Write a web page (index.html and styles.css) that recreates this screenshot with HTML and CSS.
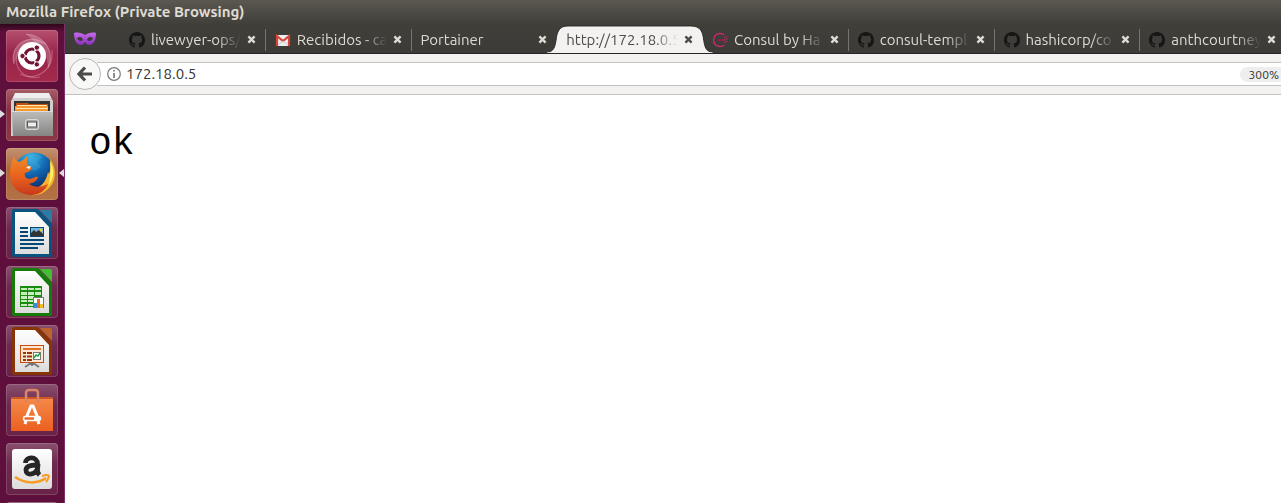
FILE: index.html
```html
<!DOCTYPE html>
<html lang="en">
<head>
<meta charset="utf-8">
<title>172.18.0.5</title>
<link rel="stylesheet" href="styles.css">
</head>
<body>
<svg class="defs" aria-hidden="true">
  <defs>
    <linearGradient id="paper" x1="0" y1="0" x2="0" y2="1"><stop offset="0" stop-color="#fff"/><stop offset="1" stop-color="#dcdcdc"/></linearGradient>
    <linearGradient id="steel" x1="0" y1="0" x2="0" y2="1"><stop offset="0" stop-color="#bdbdbb"/><stop offset="1" stop-color="#858583"/></linearGradient>
    <linearGradient id="bag" x1="0" y1="0" x2="0" y2="1"><stop offset="0" stop-color="#f58b4c"/><stop offset="1" stop-color="#eb5f1e"/></linearGradient>
    <radialGradient id="globe" cx=".4" cy=".1" r=".8"><stop offset="0" stop-color="#36b3e8"/><stop offset=".5" stop-color="#126bb4"/><stop offset="1" stop-color="#0b2c66"/></radialGradient>
    <linearGradient id="fox" x1="0" y1="0" x2="0" y2="1"><stop offset="0" stop-color="#ef8b28"/><stop offset=".55" stop-color="#e8601d"/><stop offset="1" stop-color="#c63a1b"/></linearGradient>
    <linearGradient id="mask" x1="0" y1="0" x2="0" y2="1"><stop offset="0" stop-color="#c46be8"/><stop offset="1" stop-color="#8a2fc0"/></linearGradient>
    <symbol id="github" viewBox="0 0 16 16"><path fill="#161616" d="M8 0C3.58 0 0 3.58 0 8c0 3.54 2.29 6.53 5.47 7.59.4.07.55-.17.55-.38 0-.19-.01-.82-.01-1.49-2.01.37-2.53-.49-2.69-.94-.09-.23-.48-.94-.82-1.13-.28-.15-.68-.52-.01-.53.63-.01 1.08.58 1.23.82.72 1.21 1.87.87 2.33.66.07-.52.28-.87.51-1.07-1.78-.2-3.64-.89-3.64-3.95 0-.87.31-1.59.82-2.15-.08-.2-.36-1.02.08-2.12 0 0 .67-.21 2.2.82a7.6 7.6 0 0 1 4 0c1.53-1.04 2.2-.82 2.2-.82.44 1.1.16 1.92.08 2.12.51.56.82 1.27.82 2.15 0 3.07-1.87 3.75-3.65 3.95.29.25.54.73.54 1.48 0 1.07-.01 1.93-.01 2.2 0 .21.15.46.55.38A8.01 8.01 0 0 0 16 8c0-4.42-3.58-8-8-8z"/></symbol>
    <symbol id="close" viewBox="0 0 9 9"><path d="M1.4 1.4l6.2 6.2M7.6 1.4L1.4 7.6" stroke="currentColor" stroke-width="2.4"/></symbol>
  </defs>
</svg>

<header class="titlebar">Mozilla Firefox (Private Browsing)</header>
<div class="desktop">
  <nav class="launcher" aria-label="Launcher">
    <button class="tile tile-dash" aria-label="Search your computer">
      <svg viewBox="0 0 52 52"><g fill="none" stroke="#efb7c6" stroke-opacity=".35" stroke-width="1.2"><path d="M8 34C3 14 24 2 40 14"/><path d="M20 4C38 5 50 22 42 38"/><path d="M46 20C48 40 30 52 14 44"/><path d="M34 47C18 50 6 38 12 22"/></g><path d="M20 4C38 5 50 22 42 38Q42 22 30 13z" fill="#fff" opacity=".22"/><path d="M8 34C3 14 24 2 40 14Q24 10 13 22z" fill="#fff" opacity=".2"/>
      <circle cx="26" cy="26" r="14" fill="#fff"/><circle cx="26" cy="26" r="7" fill="none" stroke="#731337" stroke-width="3.2"/><path d="M26 26H15M26 26l5.5-10M26 26l5.5 10" stroke="#fff" stroke-width="1.5"/><g fill="#731337" stroke="#fff"><circle cx="16.5" cy="26" r="2.7"/><circle cx="30.8" cy="17.6" r="2.7"/><circle cx="30.8" cy="34.4" r="2.7"/></g><circle cx="26" cy="26" r="5" fill="#fff"/></svg>
    </button>
    <button class="tile tile-files" aria-label="Files">
      <svg viewBox="0 0 52 52"><path d="M9 5h34l4 7v35H5V12z" fill="#cecece"/><path d="M9 4h34l2 5H7z" fill="#eee"/><path d="M8 12h36v10H8z" fill="#343434"/><path d="M10 14h12l1 1h19v7H10z" fill="#bd5414"/><path d="M9 17h33v5H9z" fill="#f39a35"/><path d="M11 16h30v1H11zM10 19h32v1H10z" fill="#ffe3b0"/><path d="M6 22h40l1 4v20q0 1-1 1H8q-1 0-1-1z" fill="url(#steel)"/><path d="M6 22h40v1H6z" fill="#ddd"/><rect x="19.500" y="30.500" width="13" height="10" rx="2" fill="#a8a8a8" stroke="#ddd"/><rect x="21.500" y="33" width="9" height="5" fill="#eee" stroke="#555"/></svg>
    </button>
    <button class="tile tile-firefox" aria-label="Firefox">
      <svg viewBox="0 0 52 52"><circle cx="28" cy="25" r="20.500" fill="url(#globe)"/><path d="M22 8c5-4 12-2 14 1l-5 5 4 5-7 4-5-4z" fill="#57b7df" opacity=".25"/><path d="M44 11C51 20 51 34 42 41c-5 5-11 7-17 6l-3-6c11 1 18-6 20-17l1 2c2-5 2-10 1-15z" fill="#f6b32b"/><path d="M44 13c5 9 4 18-2 25 2-6 3-12 2-25z" fill="#fff16b"/><path d="M8 9c1 3 3 4 5 5 3-1 6-3 8-6 0 4 0 6 1 9l4 3c-1 3-4 4-7 5-1 3 1 6 5 6 4-1 6-3 8-2-1 4-5 6-9 7 6 4 13 3 19 0-3 7-9 11-16 11C12 47 4 38 4 26c0-7 1-12 4-17z" fill="url(#fox)"/><path d="M20 19l5-1-2 3z" fill="#fff"/></svg>
    </button>
    <button class="tile" aria-label="LibreOffice Writer">
      <svg viewBox="0 0 52 52"><path d="M8 2h24l14 15v31q0 2-2 2H8q-2 0-2-2V4q0-2 2-2z" fill="#08537f"/><path d="M34 3h10q2 0 2 2v11z" fill="#287da7"/><path d="M9 5h20l14 15v27H9z" fill="url(#paper)"/><path d="M14 21h8M14 25h8M14 29h8M14 33h24M14 37h24M14 41h18" stroke="#064875" stroke-width="2"/><rect x="24.500" y="20.500" width="13" height="9" fill="#73b8dc" stroke="#064875"/><path d="M25 29v-3l3-3 2 2 3-2 4 4v2z" fill="#333"/><circle cx="35" cy="23" r="1.500" fill="#f4cb3c"/></svg>
    </button>
    <button class="tile" aria-label="LibreOffice Calc">
      <svg viewBox="0 0 52 52"><path d="M8 2h24l14 15v31q0 2-2 2H8q-2 0-2-2V4q0-2 2-2z" fill="#177b0c"/><path d="M34 3h10q2 0 2 2v11z" fill="#43bd31"/><path d="M9 5h20l14 15v27H9z" fill="url(#paper)"/><path d="M14 20h22v21H14z" fill="#178c0d"/><path d="M15 22h6v2h-6zm7 0h6v2h-6zm7 0h6v2h-6zM15 26h6v3h-6zm7 0h6v3h-6zm7 0h6v3h-6zM15 30h6v3h-6zm7 0h6v3h-6zM15 34h6v2h-6zm7 0h6v2h-6zM15 38h6v2h-6zm7 0h6v2h-6z" fill="#c9edbf"/><rect x="27.500" y="31.500" width="10" height="10" fill="#fff" stroke="#777"/><path d="M28 37h3v5h-3z" fill="#368ed1"/><path d="M31 33h3v9h-3z" fill="#e66b22"/><path d="M34 38h3v4h-3z" fill="#f2be25"/></svg>
    </button>
    <button class="tile" aria-label="LibreOffice Impress">
      <svg viewBox="0 0 52 52"><path d="M8 2h24l14 15v31q0 2-2 2H8q-2 0-2-2V4q0-2 2-2z" fill="#873507"/><path d="M34 3h10q2 0 2 2v11z" fill="#bd642d"/><path d="M9 5h20l14 15v27H9z" fill="url(#paper)"/><rect x="14.500" y="20.500" width="23" height="17" fill="#fce7d5" stroke="#c74c12"/><path d="M17 24h18" stroke="#e57023" stroke-width="2"/><path d="M17 28h3M17 31.500h3M17 35h3M21 28h5M21 31.500h5M21 35h5" stroke="#943608" stroke-width="2"/><rect x="27.500" y="27.500" width="7" height="7" fill="#fff" stroke="#777"/><path d="M28 33l2-3 2 1 2-3" stroke="#299d35" stroke-width="1.500" fill="none"/><path d="M26 38v3M25 38l-6 4M27 38l6 4" stroke="#777" stroke-width="2"/></svg>
    </button>
    <button class="tile" aria-label="Ubuntu Software">
      <svg viewBox="0 0 52 52"><path d="M5 13h42v34H5z" fill="url(#bag)"/><path d="M5 13h42v2H5z" fill="#cc5828"/><path d="M20 18V9q0-3 3-3h6q3 0 3 3v9" fill="none" stroke="#d78467" stroke-width="2.500"/><path d="M20.500 33L25 22h2l4.500 11" fill="none" stroke="#fff" stroke-width="3"/><rect x="17.500" y="32.500" width="17" height="4" rx="2" fill="#ee6a2c" stroke="#fff" stroke-width="1.500"/><path d="M28 34.500h6" stroke="#fff" stroke-width="3"/><path d="M20 37l-1 3M32 37l1 3" stroke="#fff" stroke-width="3"/></svg>
    </button>
    <button class="tile" aria-label="Amazon">
      <svg viewBox="0 0 52 52"><rect x="6" y="6" width="40" height="40" rx="3" fill="url(#paper)"/><path d="M19.500 20c0-7 12-7 12 1v7c0 2 1 3 2 4M30 22c-7 0-10 2-10 5 0 6 8 5 11 0 1-2 1-3 1-6" fill="none" stroke="#262626" stroke-width="4.800"/><path d="M9 34c10 7 23 7 31 1" fill="none" stroke="#f79b21" stroke-width="2.500"/><path d="M36 33q6-2 7 0-1 4-3 6" fill="none" stroke="#f79b21" stroke-width="2"/></svg>
    </button>
    <button class="tile" aria-label="More applications"></button>
    <span class="marker marker-files"></span>
    <span class="marker marker-firefox"></span>
    <span class="marker marker-focus"></span>
  </nav>
  <div class="browser">
    <div class="tabbar">
      <svg class="mask" viewBox="0 0 24 14" aria-label="Private browsing"><path fill="url(#mask)" d="M1 1c4-1 8 0 11 2 3-2 7-3 11-2 0 6-2 12-7 12-2 0-3-2-4-3-1 1-2 3-4 3C3 13 1 7 1 1z"/><path d="M4 6c3-2 5-1 6 2-2 2-5 1-6-2zM20 6c-3-2-5-1-6 2 2 2 5 1 6-2z" fill="#3c3b37"/></svg>
      <div class="tabs">
        <div class="tab"><svg class="favicon"><use href="#github"/></svg><span class="label">livewyer-ops/</span><button class="close" aria-label="Close tab"><svg><use href="#close"/></svg></button></div>
        <div class="tab"><svg class="favicon" viewBox="0 0 16 16"><path d="M1 3h14v11H1z" fill="#eee"/><path d="M2 14V4l6 5 6-5v10" fill="none" stroke="#d54437" stroke-width="2.200"/><path d="M3 13l5-4 5 4" fill="none" stroke="#ccc"/></svg><span class="label">Recibidos - ca</span><button class="close" aria-label="Close tab"><svg><use href="#close"/></svg></button></div>
        <div class="tab before-active"><span class="label">Portainer</span><button class="close" aria-label="Close tab"><svg><use href="#close"/></svg></button></div>
        <div class="tab active"><svg class="tab-shape" viewBox="0 0 166 30" preserveAspectRatio="none"><path d="M0 30v-2C7 28 8 22 9 16 10 7 12 1 21 1H144C154 1 156 7 157 16 158 22 159 28 166 28v2z" fill="#f3f2f1" stroke="#292824"/><path d="M0 28.500h166V30H0z" fill="#f3f2f1"/></svg><span class="label">http://172.18.0.5</span><button class="close" aria-label="Close tab"><svg><use href="#close"/></svg></button></div>
        <div class="tab"><svg class="favicon" viewBox="0 0 16 16"><path d="M12.200 3A6.500 6.500 0 1 0 12.200 13" fill="none" stroke="#c62a71" stroke-width="1.500"/><circle cx="7.500" cy="8" r="1.500" fill="#961d55"/><g fill="#c62a71"><circle cx="10.500" cy="8" r=".8"/><circle cx="12.800" cy="6" r=".8"/><circle cx="12.800" cy="8" r=".8"/><circle cx="12.800" cy="10" r=".8"/><circle cx="15" cy="7" r=".7"/><circle cx="15" cy="9.500" r=".7"/><circle cx="14.500" cy="4.500" r=".7"/></g></svg><span class="label">Consul by Ha</span><button class="close" aria-label="Close tab"><svg><use href="#close"/></svg></button></div>
        <div class="tab"><svg class="favicon"><use href="#github"/></svg><span class="label">consul-templ</span><button class="close" aria-label="Close tab"><svg><use href="#close"/></svg></button></div>
        <div class="tab"><svg class="favicon"><use href="#github"/></svg><span class="label">hashicorp/co</span><button class="close" aria-label="Close tab"><svg><use href="#close"/></svg></button></div>
        <div class="tab"><svg class="favicon"><use href="#github"/></svg><span class="label">anthcourtney</span><button class="close" aria-label="Close tab"><svg><use href="#close"/></svg></button></div>
      </div>
    </div>
    <div class="toolbar">
      <button class="back" aria-label="Back"><svg viewBox="0 0 16 16"><path d="M8 1.500L2 8l6 6.500M3 8h12" fill="none" stroke="#4b4b49" stroke-width="3.200"/></svg></button>
      <div class="urlbar">
        <svg class="info" viewBox="0 0 14 14"><circle cx="7" cy="7" r="6.300" fill="none" stroke="#777" stroke-width="1.200"/><path d="M7 6v5M7 3v1.500" stroke="#666" stroke-width="1.500"/></svg>
        <input class="url" type="text" value="172.18.0.5" aria-label="Address">
        <button class="zoom">300%</button>
      </div>
    </div>
    <main class="page"><pre class="output">ok</pre></main>
  </div>
</div>
</body>
</html>
```

FILE: styles.css
```css
* { box-sizing: border-box; }
body {
  margin: 0;
  height: 100vh;
  display: flex;
  flex-direction: column;
  overflow: hidden;
  font: 15px/20px "Ubuntu", "Noto Sans", sans-serif;
  background: #fff;
}
button { border: 0; padding: 0; margin: 0; font: inherit; color: inherit; background: none; }
svg { display: block; }
.defs { position: absolute; width: 0; height: 0; }
.titlebar {
  flex: none;
  height: 24px;
  padding: 0 6px;
  line-height: 24px;
  font-weight: 700;
  color: #dfdbd2;
  background: linear-gradient(#5a5850, #403f3a);
}
.desktop { flex: 1; min-height: 0; display: flex; }
.launcher {
  position: relative;
  flex: none;
  width: 65px;
  padding: 6px 7px 0 6px;
  display: flex;
  flex-direction: column;
  gap: 7px;
  overflow: hidden;
  border-right: 1px solid #7c3269;
  background: linear-gradient(#2f071c, #5f0f3b 8px, #5f0f3b);
}
.tile {
  flex: none;
  width: 52px;
  height: 52px;
  border-radius: 4px;
  background: linear-gradient(#89506f, #6d2a4d 40%, #6a2348);
  box-shadow: inset 0 0 0 1px #ffffff26;
}
.tile svg { width: 52px; height: 52px; }
.tile-dash { background: linear-gradient(#b5506f, #98244b 45%, #a32a4b); }
.tile-files { background: linear-gradient(#a65e68, #862f40 40%, #8c3847); }
.tile-firefox { background: linear-gradient(#c39270, #ad693e 40%, #b37145); }
.marker { position: absolute; border: 4px solid transparent; }
.marker-files { left: 0; top: 86px; border-left: 5px solid #ddd; border-right: 0; }
.marker-firefox { left: 0; top: 145px; border-left: 5px solid #ddd; border-right: 0; }
.marker-focus { right: 0; top: 145px; border-right: 5px solid #ddd; border-left: 0; }
.browser { flex: 1; min-width: 0; display: flex; flex-direction: column; }
.tabbar {
  flex: none;
  height: 30px;
  display: flex;
  overflow: hidden;
  background: linear-gradient(#403f3a, #3c3b37);
  border-bottom: 1px solid #292428;
}
.mask { flex: none; width: 24px; height: 14px; margin: 8px 23px 0 8px; }
.tabs { flex: 1; min-width: 0; display: flex; margin-right: -5px; }
.tab {
  flex: 1 1 0;
  min-width: 0;
  position: relative;
  display: flex;
  align-items: center;
  padding: 2px 10px 0 9px;
  color: #dfdbd2;
}
.tab::after { content: ""; position: absolute; right: 0; top: 5px; bottom: 2px; width: 1px; background: #77756f; }
.before-active::after, .active::after, .tab:last-child::after { display: none; }
.active { color: #4c4c4c; }
.tab-shape { position: absolute; left: -10px; right: -10px; top: 1px; width: calc(100% + 20px); height: 29px; }
.favicon { flex: none; width: 16px; height: 16px; margin-right: 6px; }
.label {
  flex: 1;
  min-width: 0;
  position: relative;
  overflow: hidden;
  white-space: nowrap;
  margin-right: 6px;
  -webkit-mask-image: linear-gradient(to left, transparent, #000 24px);
  mask-image: linear-gradient(to left, transparent, #000 24px);
}
.close { position: relative; flex: none; width: 9px; height: 9px; }
.close svg { width: 9px; height: 9px; }
.toolbar {
  flex: none;
  height: 41px;
  display: flex;
  align-items: center;
  padding-left: 4px;
  background: #f3f2f1;
  border-bottom: 1px solid #c3c2c1;
}
.back {
  position: relative;
  flex: none;
  width: 32px;
  height: 32px;
  display: grid;
  place-items: center;
  border: 1px solid #b8b7b5;
  border-radius: 50%;
  background: #f8f8f7;
}
.back svg { width: 16px; height: 16px; }
.urlbar {
  flex: 1;
  min-width: 0;
  height: 24px;
  display: flex;
  align-items: center;
  margin-left: -4px;
  padding-left: 10px;
  background: #fff;
  border: solid #c3c2c1;
  border-width: 1px 0;
}
.info { flex: none; width: 14px; height: 14px; margin-right: 5px; }
.url { flex: 1; min-width: 0; border: 0; padding: 0; outline: 0; font: inherit; color: #333; background: none; }
.zoom { flex: none; height: 15px; padding: 0 2px 0 9px; border-radius: 8px 0 0 8px; font-size: 12px; line-height: 15px; color: #333; background: #eee; }
.page { flex: 1; padding: 24px; background: #fff; }
.output { margin: 0; font: 38px/50px "Liberation Mono", monospace; color: #000; }
```
